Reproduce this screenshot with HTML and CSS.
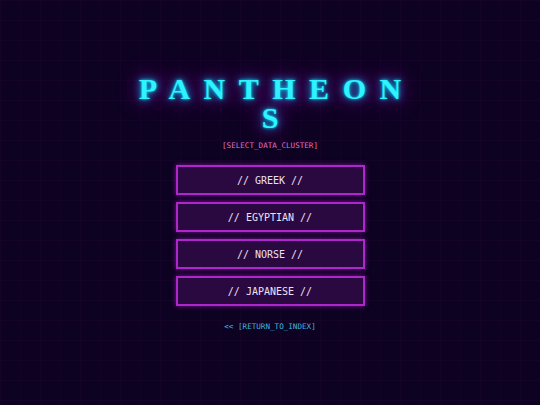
FILE: index.html
```html
<!DOCTYPE html>
<html>
<head>
<meta charset="utf-8">
<link rel="stylesheet" href="styles.css">
</head>
<body>
<main class="screen">
  <h1 class="title">PANTHEONS</h1>
  <p class="subtitle">[SELECT_DATA_CLUSTER]</p>
  <nav class="menu">
    <button class="item">// GREEK //</button>
    <button class="item">// EGYPTIAN //</button>
    <button class="item">// NORSE //</button>
    <button class="item">// JAPANESE //</button>
  </nav>
  <a class="back" href="#">&lt;&lt; [RETURN_TO_INDEX]</a>
</main>
</body>
</html>
```
FILE: styles.css
```css
html, body {
  margin: 0;
  padding: 0;
  height: 100%;
}
body {
  background-color: #0d0221;
  background-image:
    linear-gradient(rgba(180, 40, 220, 0.035) 1px, transparent 1px),
    linear-gradient(90deg, rgba(180, 40, 220, 0.035) 1px, transparent 1px);
  background-size: 20px 20px;
  font-family: "DejaVu Sans Mono", monospace;
}
.screen {
  display: flex;
  flex-direction: column;
  align-items: center;
  padding-top: 74px;
}
.title {
  margin: 0;
  width: 290px;
  text-align: center;
  word-break: break-all;
  font-family: "Liberation Serif", serif;
  font-weight: bold;
  font-size: 30px;
  line-height: 29px;
  letter-spacing: 13.5px;
  padding-left: 13.5px;
  color: #2ff3ff;
  text-shadow: 0 0 3px #00e5ff, 0 0 9px #00c8ff, 0 0 22px #c000f0;
}
.subtitle {
  margin: 9px 0 0;
  font-size: 7.6px;
  color: #e86cc8;
}
.menu {
  display: flex;
  flex-direction: column;
  gap: 7px;
  margin-top: 15px;
}
.item {
  width: 189px;
  height: 30px;
  background: #2a0940;
  border: 2px solid #ae26cc;
  box-shadow: 0 0 5px rgba(210, 40, 240, 0.55);
  color: #ece0f5;
  font-family: "DejaVu Sans Mono", monospace;
  font-size: 10px;
  padding: 0;
}
.back {
  margin-top: 16px;
  font-size: 7.6px;
  color: #3fb6e0;
  text-decoration: none;
}
```
